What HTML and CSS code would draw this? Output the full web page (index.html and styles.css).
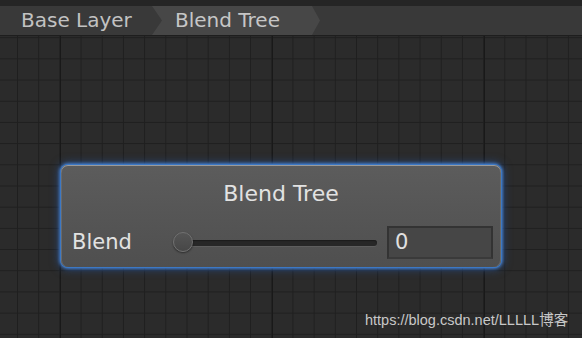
FILE: index.html
```html
<!DOCTYPE html>
<html>
<head>
<meta charset="utf-8">
<link rel="stylesheet" href="styles.css">
</head>
<body>
<div class="topstrip"></div>
<div class="bar">
  <div class="crumb crumb-base">Base Layer</div>
  <div class="crumb crumb-active">Blend Tree</div>
</div>
<div class="canvas">
  <div class="node">
    <div class="node-title">Blend Tree</div>
    <div class="node-row">
      <div class="node-label">Blend</div>
      <div class="slider">
        <div class="track"></div>
        <div class="thumb"></div>
      </div>
      <div class="field">0</div>
    </div>
  </div>
  <div class="watermark">https://blog.csdn.net/LLLLL博客</div>
</div>
</body>
</html>
```
FILE: styles.css
```css
html, body {
  margin: 0;
  padding: 0;
}
body {
  width: 582px;
  height: 338px;
  overflow: hidden;
  font-family: "DejaVu Sans", "Noto Sans CJK SC", sans-serif;
  background-color: #2b2b2b;
  background-image:
    linear-gradient(to right, #191919 1px, transparent 1px),
    linear-gradient(to right, #1f1f1f 1px, transparent 1px),
    linear-gradient(to bottom, #1f1f1f 1px, transparent 1px);
  background-size: 212px 100%, 21.2px 100%, 100% 21.2px;
  background-position: 60px 0, 17px 0, 0 16px;
  position: relative;
}
.topstrip {
  height: 6px;
  background: #252525;
}
.bar {
  height: 30px;
  background: #393939;
  border-bottom: 1px solid #1e1e1e;
  box-sizing: border-box;
  display: flex;
  color: #c2c2c2;
  font-size: 20px;
  line-height: 29px;
}
.crumb {
  height: 29px;
  box-sizing: border-box;
  white-space: nowrap;
}
.crumb-base {
  width: 152px;
  padding-left: 21px;
}
.crumb-active {
  width: 168px;
  padding-left: 23px;
  background: #474747;
  color: #c6c6c6;
  clip-path: polygon(0 0, 160px 0, 168px 50%, 160px 100%, 0 100%, 10px 50%);
}
.canvas {
  position: relative;
  height: 302px;
}
.node {
  position: absolute;
  left: 61px;
  top: 129px;
  width: 440px;
  height: 102px;
  box-sizing: border-box;
  border-radius: 7px;
  background: linear-gradient(to bottom, #5c5c5c, #4f4f4f);
  box-shadow:
    inset 0 1px 0 #9a9a9a,
    inset 1px 0 0 #6a6a6a,
    inset -1px 0 0 #6a6a6a,
    0 0 0 1px #3c78c4,
    0 0 3px 2px rgba(70, 130, 210, 0.85),
    0 0 8px 3px rgba(40, 90, 170, 0.5);
  padding-top: 16px;
  color: #e2e2e2;
}
.node-title {
  text-align: center;
  font-size: 22px;
  line-height: 26px;
}
.node-row {
  margin-top: 19px;
  display: flex;
  align-items: center;
  padding-left: 11px;
  height: 33px;
}
.node-label {
  width: 101px;
  font-size: 21px;
  line-height: 33px;
}
.slider {
  position: relative;
  width: 204px;
  height: 33px;
  display: flex;
  align-items: center;
}
.track {
  margin-left: 10px;
  width: 194px;
  height: 6px;
  border-radius: 0 3px 3px 0;
  background: #272727;
  box-shadow: inset 0 1px 1px #1c1c1c, 0 1px 0 #5e5e5e;
}
.thumb {
  position: absolute;
  left: 0;
  top: 6px;
  width: 20px;
  height: 20px;
  box-sizing: border-box;
  border-radius: 50%;
  background: linear-gradient(to bottom, #555, #474747);
  border: 1px solid #707070;
  box-shadow: 0 1px 2px rgba(0,0,0,0.5);
}
.field {
  margin-left: 10px;
  width: 106px;
  height: 33px;
  box-sizing: border-box;
  background: #464646;
  border: 2px solid #333;
  border-bottom-color: #3a3a3a;
  font-size: 21px;
  line-height: 29px;
  padding-left: 6px;
  color: #e0e0e0;
}
.watermark {
  position: absolute;
  left: 365px;
  top: 274px;
  font-family: "Liberation Sans", "Noto Sans CJK SC", sans-serif;
  font-size: 14.5px;
  line-height: 20px;
  color: #c8c8c8;
  white-space: nowrap;
}
```
